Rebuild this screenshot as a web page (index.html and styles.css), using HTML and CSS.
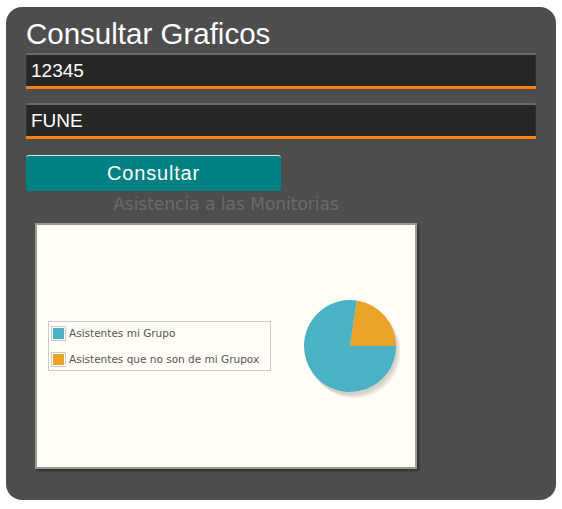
FILE: index.html
```html
<!DOCTYPE html>
<html>
<head>
<meta charset="utf-8">
<link rel="stylesheet" href="styles.css">
</head>
<body>
<div class="panel">
  <h1 class="title">Consultar Graficos</h1>
  <div class="field">12345</div>
  <div class="field">FUNE</div>
  <div class="btn">Consultar</div>
  <div class="chart-wrap">
    <div class="chart-title">Asistencia a las Monitorias</div>
    <div class="chart">
      <div class="legend">
        <div class="legend-row"><span class="swatch"><span class="sw-in blue"></span></span>Asistentes mi Grupo</div>
        <div class="legend-row"><span class="swatch"><span class="sw-in orange"></span></span>Asistentes que no son de mi Grupox</div>
      </div>
      <svg class="pie" width="104" height="104" viewBox="0 0 104 104">
        <circle cx="51.5" cy="53" r="46" fill="#000" opacity="0.06"/>
        <circle cx="53" cy="54.5" r="46" fill="#000" opacity="0.06"/>
        <circle cx="54.5" cy="56" r="46" fill="#000" opacity="0.06"/>
        <path d="M50,50 L96,50 A46,46 0 1,1 56.9,4.5 Z" fill="#4bb2c5"/>
        <path d="M50,50 L56.9,4.5 A46,46 0 0,1 96,50 Z" fill="#eaa228"/>
      </svg>
    </div>
  </div>
</div>
</body>
</html>
```
FILE: styles.css
```css
html, body { margin: 0; padding: 0; background: #fff; }
.panel {
  margin: 7px 0 0 6px;
  width: 550px;
  height: 493px;
  box-sizing: border-box;
  background: #4d4d4d;
  border-radius: 16px;
  padding: 11px 20px 0 20px;
  font-family: "Liberation Sans", Arial, sans-serif;
}
.title {
  margin: 0 0 3px 0;
  font-size: 29.5px;
  line-height: 32px;
  font-weight: normal;
  color: #fff;
}
.field {
  height: 36px;
  box-sizing: border-box;
  background: #262626;
  border-top: 2px solid #6a6a6a;
  border-bottom: 3px solid #ff7f11;
  border-radius: 2px 2px 0 0;
  color: #fff;
  font-size: 19px;
  line-height: 31px;
  padding: 0 0 0 5px;
  margin-bottom: 14px;
  box-shadow: inset 1px 0 0 #2e2e2e, inset -1px 0 0 #2e2e2e;
}
.btn {
  margin-top: 16px;
  width: 255px;
  height: 36px;
  box-sizing: border-box;
  background: #008080;
  border-top: 1px solid #cfe6e6;
  border-radius: 3px;
  color: #fff;
  text-align: center;
  font-size: 20px;
  letter-spacing: 0.8px;
  line-height: 34px;
}
.chart-wrap {
  margin-left: 9px;
  width: 382px;
}
.chart-title {
  text-align: center;
  font-family: "DejaVu Sans", sans-serif;
  font-size: 17px;
  color: #6a6a6a;
  height: 32px;
  line-height: 26px;
}
.chart {
  width: 382px;
  height: 246px;
  box-sizing: border-box;
  background: #fffdf6;
  border: 2px solid #9a9a9a;
  box-shadow: 2px 2px 2px rgba(0,0,0,0.35);
  display: flex;
  align-items: center;
  padding-left: 11px;
}
.legend {
  width: 223px;
  box-sizing: border-box;
  border: 1px solid #cccccc;
  background: #fffdf6;
  padding: 2px 0 2px 2px;
  font-family: "DejaVu Sans", sans-serif;
  font-size: 10.5px;
  color: #555;
}
.legend-row {
  display: flex;
  align-items: center;
  height: 18px;
  gap: 3px;
  white-space: nowrap;
}
.legend-row + .legend-row { margin-top: 8px; }
.swatch {
  width: 15px;
  height: 15px;
  box-sizing: border-box;
  border: 1px solid #cccccc;
  padding: 1px;
  display: flex;
}
.sw-in { flex: 1; }
.blue { background: #4bb2c5; }
.orange { background: #eaa228; }
.pie {
  margin-left: 29px;
  margin-top: 4px;
}
```
